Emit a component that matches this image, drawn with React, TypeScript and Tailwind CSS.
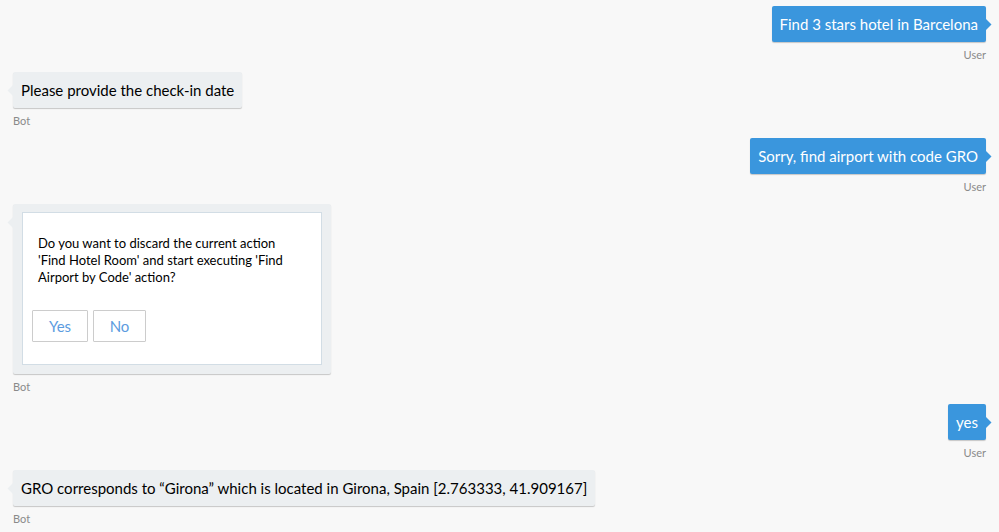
import React from "react";

type From = "user" | "bot";

const Callout = ({ from }: { from: From }) =>
  from === "user" ? (
    <svg
      className="absolute -right-[6px] top-[12px]"
      width="7"
      height="13"
      viewBox="0 0 7 13"
    >
      <polygon points="0,0 6.5,6.5 0,13" fill="#3a96dd" />
    </svg>
  ) : (
    <svg
      className="absolute -left-[6px] top-[12px]"
      width="7"
      height="13"
      viewBox="0 0 7 13"
    >
      <polygon points="7,0 0.5,6.5 7,13" fill="#eceff1" />
    </svg>
  );

const Message = ({
  from,
  children,
  card,
}: {
  from: From;
  children: React.ReactNode;
  card?: boolean;
}) => {
  const isUser = from === "user";
  return (
    <div className={`flex flex-col ${isUser ? "items-end" : "items-start"}`}>
      <div
        className={`relative rounded-[2px] shadow-[0_1px_1px_rgba(0,0,0,0.2)] ${
          isUser ? "bg-[#3a96dd] text-white" : "bg-[#eceff1] text-black"
        } ${card ? "px-[9px] pt-[8px] pb-[9px]" : "px-[8px] py-[8px] text-[15px] leading-[20px]"}`}
      >
        <Callout from={from} />
        {children}
      </div>
      <div className="mt-[5px] mb-[9px] h-[16px] text-[11px] leading-[16px] text-[#8a8a8a]">
        {isUser ? "User" : "Bot"}
      </div>
    </div>
  );
};

const ConfirmCard = () => (
  <div className="w-[300px] h-[153px] border border-[#d2dde5] bg-white">
    <p className="pl-[15px] pt-[22px] text-[13px] leading-[17px] text-black">
      Do you want to discard the current action
      <br />
      'Find Hotel Room' and start executing 'Find
      <br />
      Airport by Code' action?
    </p>
    <div className="mt-[24px] flex gap-[5px] pl-[9px]">
      <button className="h-[32px] w-[56px] border border-[#cccccc] rounded-[1px] bg-transparent text-[15px] text-[#5c9ce0]">
        Yes
      </button>
      <button className="h-[32px] w-[53px] border border-[#cccccc] rounded-[1px] bg-transparent text-[15px] text-[#5c9ce0]">
        No
      </button>
    </div>
  </div>
);

export default function App() {
  return (
    <div className="min-h-screen bg-[#f8f8f8] px-[13px] pt-[6px] font-['Segoe_UI',Lato,sans-serif]">
      <Message from="user">Find 3 stars hotel in Barcelona</Message>
      <Message from="bot">Please provide the check-in date</Message>
      <Message from="user">Sorry, find airport with code GRO</Message>
      <Message from="bot" card>
        <ConfirmCard />
      </Message>
      <Message from="user">yes</Message>
      <Message from="bot">
        GRO corresponds to “Girona” which is located in Girona, Spain [2.763333, 41.909167]
      </Message>
    </div>
  );
}
